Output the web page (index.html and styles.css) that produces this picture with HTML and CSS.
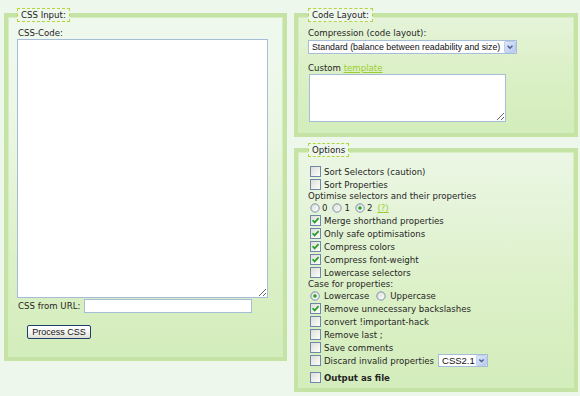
FILE: index.html
```html
<!DOCTYPE html>
<html lang="en">
<head>
<meta charset="utf-8">
<title>CSS Optimiser</title>
<link rel="stylesheet" href="styles.css">
</head>
<body>
<svg class="defs" aria-hidden="true">
  <defs>
    <linearGradient id="boxfill" x1="0" y1="0" x2="1" y2="1">
      <stop offset="0" stop-color="#dcdcd4"/>
      <stop offset="1" stop-color="#ffffff"/>
    </linearGradient>
    <linearGradient id="btnfill" x1="0" y1="0" x2="1" y2="1">
      <stop offset="0" stop-color="#dfe9fb"/>
      <stop offset="1" stop-color="#b4c8ee"/>
    </linearGradient>
    <symbol id="cb" viewBox="0 0 11 11">
      <rect x="0.5" y="0.5" width="10" height="10" fill="url(#boxfill)" stroke="#6f87a8"/>
    </symbol>
    <symbol id="cbx" viewBox="0 0 11 11">
      <rect x="0.5" y="0.5" width="10" height="10" fill="url(#boxfill)" stroke="#6f87a8"/>
      <path d="M2.6 5.2 L4.6 7.4 L8.6 3.2" fill="none" stroke="#22a022" stroke-width="1.7"/>
    </symbol>
    <symbol id="rd" viewBox="0 0 11 11">
      <circle cx="5.5" cy="5.5" r="4.6" fill="url(#boxfill)" stroke="#6f87a8"/>
    </symbol>
    <symbol id="rdx" viewBox="0 0 11 11">
      <circle cx="5.5" cy="5.5" r="4.6" fill="url(#boxfill)" stroke="#6f87a8"/>
      <circle cx="5.5" cy="5.5" r="1.9" fill="#22a022"/>
    </symbol>
    <symbol id="drop" viewBox="0 0 12 12">
      <rect x="0.5" y="0.5" width="11" height="11" rx="1" fill="url(#btnfill)" stroke="#bccbe9"/>
      <path d="M3.6 4.8 L6 7.2 L8.4 4.8" fill="none" stroke="#4d6185" stroke-width="1.5"/>
    </symbol>
  </defs>
</svg>

<div class="page">
  <fieldset class="panel input-panel">
    <legend>CSS Input:</legend>
    <label class="lbl" for="css">CSS-Code:</label>
    <textarea id="css" class="code"></textarea>
    <div class="url-row">
      <label for="url">CSS from URL:</label>
      <input id="url" class="url" type="text">
    </div>
    <button class="btn" type="button">Process CSS</button>
  </fieldset>

  <div class="right">
    <fieldset class="panel layout-panel">
      <legend>Code Layout:</legend>
      <div class="lbl">Compression (code layout):</div>
      <div class="selwrap wide">
        <select class="sel"><option>Standard (balance between readability and size)</option></select>
        <svg class="drop"><use href="#drop"/></svg>
      </div>
      <div class="lbl custom">Custom <a href="#">template</a></div>
      <textarea class="tpl"></textarea>
    </fieldset>

    <fieldset class="panel options">
      <legend>Options</legend>
      <label class="row"><svg class="box"><use href="#cb"/></svg>Sort Selectors (caution)</label>
      <label class="row"><svg class="box"><use href="#cb"/></svg>Sort Properties</label>
      <div class="txt">Optimise selectors and their properties</div>
      <div class="radios">
        <svg class="rad"><use href="#rd"/></svg><span>0</span>
        <svg class="rad"><use href="#rd"/></svg><span>1</span>
        <svg class="rad"><use href="#rdx"/></svg><span>2</span>
        <a href="#" class="help">(?)</a>
      </div>
      <label class="row"><svg class="box"><use href="#cbx"/></svg>Merge shorthand properties</label>
      <label class="row"><svg class="box"><use href="#cbx"/></svg>Only safe optimisations</label>
      <label class="row"><svg class="box"><use href="#cbx"/></svg>Compress colors</label>
      <label class="row"><svg class="box"><use href="#cbx"/></svg>Compress font-weight</label>
      <label class="row"><svg class="box"><use href="#cb"/></svg>Lowercase selectors</label>
      <div class="txt">Case for properties:</div>
      <div class="radios case">
        <svg class="rad"><use href="#rdx"/></svg><span>Lowercase</span>
        <svg class="rad"><use href="#rd"/></svg><span>Uppercase</span>
      </div>
      <label class="row"><svg class="box"><use href="#cbx"/></svg>Remove unnecessary backslashes</label>
      <label class="row"><svg class="box"><use href="#cb"/></svg>convert !important-hack</label>
      <label class="row"><svg class="box"><use href="#cb"/></svg>Remove last ;</label>
      <label class="row"><svg class="box"><use href="#cb"/></svg>Save comments</label>
      <div class="row">
        <svg class="box"><use href="#cb"/></svg>Discard invalid properties
        <span class="selwrap small">
          <select class="sel"><option>CSS2.1</option></select>
          <svg class="drop"><use href="#drop"/></svg>
        </span>
      </div>
      <label class="row out"><svg class="box"><use href="#cb"/></svg>Output as file</label>
    </fieldset>
  </div>
</div>
</body>
</html>
```

FILE: styles.css
```css
* { box-sizing: border-box; }

html, body {
  margin: 0;
  background: #eef7ec;
}

body {
  padding: 8px 2px 0 4px;
  font-family: "DejaVu Sans", Verdana, sans-serif;
  font-size: 8.6px;
  color: #262626;
}

.defs {
  position: absolute;
  width: 0;
  height: 0;
}

.page {
  display: flex;
  gap: 7px;
  align-items: flex-start;
}

.panel {
  margin: 0;
  min-width: 0;
  border: 4px solid #c6e3a6;
  padding: 0 9px;
  background: linear-gradient(to top, #d4edbc 0, #dbf0c6 90px, #eaf6e2 220px, #eff8ec 300px);
  box-shadow: inset 0 0 0 1px #d6edc0;
}

.panel legend {
  padding: 0 3px;
  margin-left: 0;
  height: 14px;
  line-height: 12px;
  border: 1px dashed #b6d43c;
  background: #eef7ec;
  color: #222;
}

.input-panel {
  width: 283px;
  padding-top: 6px;
  padding-bottom: 18px;
}

.lbl {
  display: block;
  height: 11px;
  line-height: 11px;
  padding-left: 1px;
}

.code {
  display: block;
  width: 251px;
  height: 259px;
  margin: 0;
  border: 1px solid #a5bdd6;
  background: #fff;
  padding: 2px;
  font: inherit;
}

.url-row {
  display: flex;
  align-items: center;
  gap: 4px;
  margin-top: 1px;
  padding-left: 1px;
}

.url {
  width: 168px;
  height: 14px;
  margin: 0;
  padding: 0 2px;
  border: 1px solid #a5bdd6;
  background: #fff;
  font: inherit;
}

.btn {
  display: block;
  margin: 12px 0 0 10px;
  width: 64px;
  height: 14px;
  padding: 0;
  border: 1px solid #1d3f6e;
  border-radius: 2px;
  background: linear-gradient(#ffffff, #f3f3ee 60%, #dcdcd2);
  font-family: "Liberation Sans", Arial, sans-serif;
  font-size: 9px;
  line-height: 12px;
  color: #111;
}

.right {
  width: 284px;
  display: flex;
  flex-direction: column;
  gap: 6px;
}

.layout-panel {
  padding-top: 6px;
  padding-bottom: 11px;
  padding-left: 10px;
  background: linear-gradient(to top, #d4edbc 0, #dbf0c6 60px, #e6f4da 120px);
}

.layout-panel .lbl { padding-left: 0; }

.selwrap {
  position: relative;
  display: block;
}

.sel {
  display: block;
  margin: 0;
  padding: 0 0 0 3px;
  border: 1px solid #a5bdd6;
  background: #fff;
  appearance: none;
  -webkit-appearance: none;
  border-radius: 0;
  font-family: "Liberation Sans", Arial, sans-serif;
  font-size: 8.8px;
  color: #111;
}

.wide {
  margin-top: 1px;
  width: 209px;
}

.wide .sel {
  width: 209px;
  height: 14px;
  line-height: 12px;
}

.drop {
  position: absolute;
  right: 1px;
  top: 1px;
  width: 12px;
  height: 12px;
}

.custom {
  margin-top: 9px;
}

.custom a,
.help {
  color: #9ccc2e;
  text-decoration: underline;
}

.tpl {
  display: block;
  margin: 0 0 0 1px;
  width: 197px;
  height: 48px;
  border: 1px solid #a5bdd6;
  background: #fff;
  font: inherit;
}

.options {
  padding-top: 8px;
  padding-bottom: 4px;
  padding-left: 10px;
}

.row {
  display: flex;
  align-items: center;
  height: 13px;
  white-space: nowrap;
}

.box {
  width: 11px;
  height: 11px;
  margin: 0 3px 0 2px;
  flex: none;
}

.txt {
  height: 11px;
  line-height: 11px;
}

.radios {
  display: flex;
  align-items: center;
  height: 12px;
  padding-left: 2px;
}

.rad {
  width: 10px;
  height: 10px;
  flex: none;
  margin-right: 2px;
}

.radios span { margin-right: 5px; }

.radios.case .rad { margin-right: 4px; }
.radios.case span { margin-right: 7px; }

.small {
  display: inline-block;
  margin-left: 4px;
  width: 50px;
}

.small .sel {
  width: 50px;
  height: 13px;
  line-height: 11px;
  font-size: 9.5px;
}

.small .drop {
  width: 11px;
  height: 11px;
}

.out {
  margin-top: 4px;
  font-weight: bold;
}
```
